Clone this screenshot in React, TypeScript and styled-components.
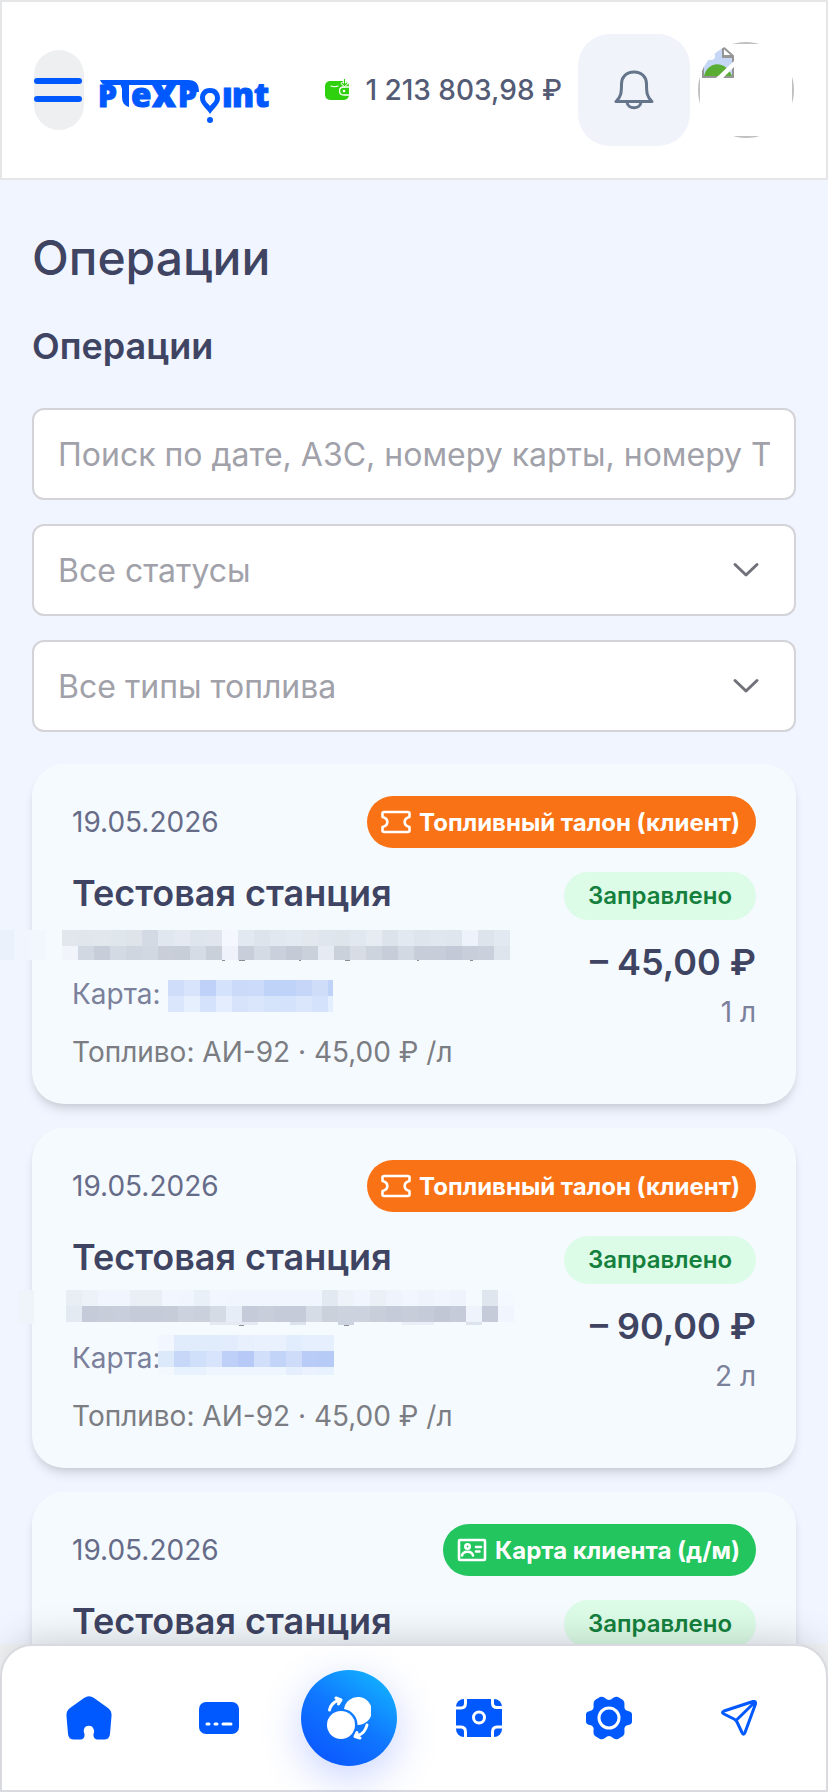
import React from 'react';
import styled, { createGlobalStyle } from 'styled-components';

const BLUE = '#0059ff';

const GlobalStyle = createGlobalStyle`
  *, *::before, *::after { box-sizing: border-box; }
  body {
    margin: 0;
    background: #f2f3f4;
    color: #3e4462;
    font-family: Inter, "Noto Sans", sans-serif;
  }
  button, input, select { font: inherit; }
  h1, h2, h3, p, ul { margin: 0; padding: 0; }
`;

const Page = styled.div`
  display: flex;
  flex-direction: column;
  height: 100vh;
`;

const Header = styled.header`
  display: flex;
  flex: none;
  align-items: center;
  height: 180px;
  padding: 0 32px;
  border: 2px solid #e5e6e8;
  background: #fff;
`;

const MenuButton = styled.button`
  display: flex;
  flex-direction: column;
  justify-content: center;
  gap: 12px;
  width: 50px;
  height: 80px;
  padding: 0;
  border: 0;
  border-radius: 25px;
  background: #eeeff1;
`;

const MenuLine = styled.span`
  width: 48px;
  height: 6px;
  border-radius: 3px;
  background: ${BLUE};
`;

const LogoLink = styled.a`
  display: flex;
  margin-left: 12px;
`;

const Balance = styled.div`
  display: flex;
  align-items: center;
  gap: 16px;
  margin-left: auto;
  color: #535b75;
  font-size: 28px;
  font-weight: 500;
  line-height: 40px;
  white-space: nowrap;
`;

const BellButton = styled.button`
  display: flex;
  align-items: center;
  justify-content: center;
  width: 112px;
  height: 112px;
  margin-left: 16px;
  padding: 0;
  border: 0;
  border-radius: 32px;
  background: #f0f3f9;
`;

const Avatar = styled.button`
  width: 96px;
  height: 96px;
  margin-left: 8px;
  padding: 0;
  overflow: hidden;
  border: 0;
  border-radius: 48px;
  background: #fff;
`;

const AvatarFrame = styled.span`
  display: flex;
  width: 96px;
  height: 96px;
  padding: 2px;
  border: 2px solid #c0c0c0;
`;

const Main = styled.main`
  flex: 1;
  min-height: 0;
  padding: 50px 32px 0;
  overflow: hidden;
  background: #f1f5ff;
`;

const Title = styled.h1`
  font-size: 48px;
  font-weight: 500;
  line-height: 56px;
`;

const Subtitle = styled.h2`
  margin-top: 36px;
  font-size: 36px;
  font-weight: 600;
  line-height: 48px;
`;

const Filters = styled.form`
  display: flex;
  flex-direction: column;
  gap: 24px;
  margin-top: 38px;
`;

const SearchInput = styled.input`
  width: 100%;
  height: 92px;
  padding: 0 24px;
  border: 2px solid #d3d3d8;
  border-radius: 12px;
  background: #fff;
  font-size: 32px;
  &::placeholder { color: #a1a1aa; opacity: 1; }
`;

const SelectField = styled.div`
  position: relative;
  display: flex;
  svg {
    position: absolute;
    top: 32px;
    right: 36px;
    pointer-events: none;
  }
`;

const Select = styled.select`
  width: 100%;
  height: 92px;
  padding: 0 24px;
  appearance: none;
  border: 2px solid #d3d3d8;
  border-radius: 12px;
  background: #fff;
  color: #a1a1aa;
  font-size: 32px;
`;

const CardList = styled.ul`
  display: flex;
  flex-direction: column;
  gap: 24px;
  margin-top: 32px;
  list-style: none;
`;

const Card = styled.li`
  padding: 32px 40px;
  border-radius: 32px;
  background: #f5faff;
  box-shadow: 0 8px 12px -2px rgba(0, 0, 0, 0.1), 0 4px 8px -4px rgba(0, 0, 0, 0.14);
`;

const CardTop = styled.div`
  display: flex;
  align-items: center;
  justify-content: space-between;
`;

const DateText = styled.time`
  color: #666c88;
  font-size: 28px;
  line-height: 40px;
`;

const TypeBadge = styled.span<{ $color: string }>`
  display: flex;
  align-items: center;
  gap: 8px;
  height: 52px;
  padding: 0 16px 0 14px;
  border-radius: 26px;
  background: ${(p) => p.$color};
  color: #fff;
  font-size: 24px;
  font-weight: 700;
  white-space: nowrap;
`;

const CardBody = styled.div`
  display: flex;
  justify-content: space-between;
  margin-top: 24px;
`;

const Details = styled.div`
  display: flex;
  flex-direction: column;
`;

const Station = styled.h3`
  font-size: 36px;
  font-weight: 600;
  line-height: 42px;
`;

const Address = styled.div`
  height: 40px;
  margin-top: 10px;
`;

const CardNumber = styled.p`
  display: flex;
  height: 40px;
  margin-top: 10px;
  color: #7b809b;
  font-size: 28px;
  line-height: 40px;
`;

const Fuel = styled.p`
  margin-top: 18px;
  color: #7b7d82;
  font-size: 28px;
  line-height: 40px;
  white-space: nowrap;
`;

const Totals = styled.div`
  display: flex;
  flex-direction: column;
  align-items: flex-end;
`;

const Status = styled.span`
  height: 48px;
  padding: 0 24px;
  border-radius: 24px;
  background: #dcfce7;
  color: #15803d;
  font-size: 24px;
  font-weight: 600;
  line-height: 48px;
`;

const Price = styled.p`
  margin-top: 18px;
  font-size: 36px;
  font-weight: 600;
  line-height: 48px;
  white-space: nowrap;
`;

const Volume = styled.p`
  margin-top: 6px;
  color: #7b809b;
  font-size: 28px;
  line-height: 40px;
`;

const MosaicSvg = styled.svg`
  display: block;
  overflow: visible;
`;

const Nav = styled.nav`
  position: relative;
  display: grid;
  flex: none;
  grid-template-columns: repeat(6, 1fr);
  align-items: center;
  justify-items: center;
  height: 148px;
  padding: 0 22px;
  border: 2px solid #d9dae0;
  border-radius: 32px 32px 0 0;
  background: #fff;
  box-shadow: 0 -12px 40px -12px rgba(0, 0, 0, 0.2);
`;

const NavLink = styled.a<{ $active?: boolean }>`
  display: flex;
  align-items: center;
  justify-content: center;
  width: 96px;
  height: 96px;
  border-radius: 48px;
  color: ${(p) => (p.$active ? '#fff' : BLUE)};
  background: ${(p) => (p.$active ? 'linear-gradient(35deg, #0b57ff 10%, #1077ff 50%, #12b0ff 90%)' : 'none')};
  box-shadow: ${(p) => (p.$active ? '0 12px 40px rgba(60, 100, 255, 0.28)' : 'none')};
`;

const Logo = () => (
  <svg width="180" height="72" viewBox="-4 -26 180 72" role="img" aria-label="PlexPoint">
    <path d="M0 0H88C96 0 99 4 99 12H93C93 7 92 5 88 5H6Q2 5 0 0Z" fill={BLUE} />
    <g fill={BLUE} stroke={BLUE} strokeWidth="1" fontFamily="Open Sans" fontWeight="800" fontSize="33">
      <text x="-2" y="27" fontSize="30">P</text>
      <text x="31" y="27">e</text>
      <text x="52" y="27" fontSize="38">x</text>
      <text x="78" y="27" fontSize="30">P</text>
      <text x="122 132 154" y="27">ınt</text>
    </g>
    <path d="M20 3H29V27Q22 25 22 17V9Z" fill={BLUE} />
    <path fillRule="evenodd" d="M110 8C103 8 100 13 100 18C100 24 106 28 110 34C114 28 120 24 120 18C120 13 117 8 110 8ZM110 13C113 13 115 15 115 18C115 22 112 23 110 26C108 23 105 22 105 18C105 15 107 13 110 13Z" fill={BLUE} />
    <circle cx="110" cy="40" r="3" fill={BLUE} />
  </svg>
);

const WalletIcon = () => (
  <svg width="24" height="24" viewBox="0 0 24 24" aria-hidden="true">
    <rect y="3" width="24" height="19" rx="5" fill="#2fd10f" />
    <path d="M6 8Q9.500 9.500 13 8" stroke="#fff" strokeWidth="1.200" fill="none" strokeLinecap="round" />
    <path d="M24 9H19C13 9 13 17 19 17H24" fill="#2fd10f" stroke="#fff" strokeWidth="1.300" />
    <circle cx="19" cy="13" r="1.300" fill="#fff" />
    <path d="M19.500 0V7M16.500 4.500L19.500 7.500L22.500 4.500" stroke="#fff" strokeWidth="3" fill="none" />
    <path d="M19.500 1V7M17 5L19.500 7.500L22 5" stroke="#2fd10f" strokeWidth="1.200" fill="none" />
  </svg>
);

const BellIcon = () => (
  <svg width="40" height="40" viewBox="0 0 40 40" fill="none" stroke="#64748b" strokeWidth="3" strokeLinejoin="round" aria-hidden="true">
    <path d="M20 2C12 2 7.500 7.500 7.500 14C7.500 23 7 27 2 31.500H38C33 27 32.500 23 32.500 14C32.500 7.500 28 2 20 2Z" />
    <path d="M13 32C13.500 39.500 26.500 39.500 27 32" />
  </svg>
);

const BrokenImageIcon = () => (
  <svg width="32" height="32" viewBox="0 0 32 32" aria-hidden="true">
    <path d="M1 1H21V11H31V31H1Z" fill="#c5d7f5" stroke="#969696" strokeWidth="2" />
    <path d="M2 30C6 15 23 14 30 30Z" fill="#5aad33" />
    <circle cx="9" cy="10" r="4" fill="#fff" />
    <path d="M21 1V10H31Z" fill="#fff" stroke="#969696" strokeWidth="2" />
    <path d="M32 15V21L21 32H14Z" fill="#fff" />
  </svg>
);

const Chevron = () => (
  <svg width="28" height="28" viewBox="0 0 28 28" fill="none" stroke="#71717a" strokeWidth="3" strokeLinecap="round" strokeLinejoin="round" aria-hidden="true">
    <path d="M3 8.500L14 19L25 8.500" />
  </svg>
);

const TicketIcon = () => (
  <svg width="30" height="24" viewBox="0 0 30 24" fill="none" stroke="#fff" strokeWidth="2.600" strokeLinejoin="round" aria-hidden="true">
    <path d="M3 2H27Q28.500 2 28.500 3.500V7C22 8.500 22 15.500 28.500 17V20.500Q28.500 22 27 22H3Q1.500 22 1.500 20.500V17C8 15.500 8 8.500 1.500 7V3.500Q1.500 2 3 2Z" />
  </svg>
);

const ClientCardIcon = () => (
  <svg width="30" height="24" viewBox="0 0 30 24" fill="none" stroke="#fff" strokeWidth="2.600" strokeLinecap="round" aria-hidden="true">
    <rect x="2" y="2" width="26" height="20" rx="1" />
    <circle cx="10.500" cy="8.500" r="2.200" />
    <path d="M5 17.500C6 12.500 15 12.500 16 17.500M19 9H24M19 13.500H22.500" />
  </svg>
);

const HomeIcon = () => (
  <svg width="46" height="44" viewBox="0 0 46 44" fill="currentColor" aria-hidden="true">
    <path d="M18 2Q23 -1.500 28 2L42 12Q46 15 45.500 20L44 38Q43.500 43.500 38 43.500H31Q27 43 27.500 38Q29 35 27 32C26 29 20 29 18.500 32Q17 35 18.500 38Q19 43 15 43.500H8Q2.500 43.500 2 38L.5 20Q0 15 4 12Z" />
  </svg>
);

const CardIcon = () => (
  <svg width="40" height="32" viewBox="0 0 40 32" aria-hidden="true">
    <rect width="40" height="32" rx="7" fill="currentColor" />
    <path d="M8 22H10M16 22H18M24 22H32" stroke="#fff" strokeWidth="3" strokeLinecap="round" />
  </svg>
);

const OperationsIcon = () => (
  <svg width="44" height="44" viewBox="0 0 44 44" fill="currentColor" aria-hidden="true">
    <path d="M17 13A14 14 0 1 1 30.500 29A16 16 0 0 0 17 13Z" />
    <circle cx="14" cy="29" r="14" />
    <g fill="none" stroke="currentColor" strokeWidth="3" strokeLinecap="round" strokeLinejoin="round">
      <path d="M2.500 14Q4 7 11 4.500M9 2L14 4L11.500 8" />
      <path d="M40 29Q38 37 31 39.500M33 42L28 40.500L30 36.500" />
    </g>
  </svg>
);

const MoneyIcon = () => (
  <svg width="46" height="38" viewBox="0 0 46 38" aria-hidden="true">
    <rect width="46" height="38" rx="8" fill="currentColor" />
    <g fill="none" stroke="#fff" strokeWidth="3">
      <path d="M0 9H5Q9.500 9 9.500 4V0M36.500 0V4Q36.500 8.500 41 8.500H46M0 28H5Q9.500 28 9.500 33V38M36.500 38V33Q36.500 28 41 28H46" />
      <circle cx="23" cy="18.500" r="5.500" />
    </g>
  </svg>
);

const GearIcon = () => (
  <svg width="46" height="44" viewBox="0 0 46 44" aria-hidden="true">
    <path d="M14 1Q16 0 19 2Q23 6 27 2Q30 0 32 1L37 4Q39 6 38.500 9Q37.500 14 42 15Q45.500 15.500 46 18V26Q45.500 28.500 42 29Q37.500 30 38.500 35Q39 38 37 40L32 43Q30 44 27 42Q23 38 19 42Q16 44 14 43L9 40Q7 38 7.500 35Q8.500 30 4 29Q.5 28.500 0 26V18Q.5 15.500 4 15Q8.500 14 7.500 9Q7 6 9 4Z" fill="currentColor" />
    <circle cx="23" cy="22" r="10" fill="none" stroke="#fff" strokeWidth="3" />
  </svg>
);

const SendIcon = () => (
  <svg width="36" height="36" viewBox="0 0 36 36" fill="none" stroke="currentColor" strokeWidth="3" strokeLinejoin="round" aria-hidden="true">
    <path d="M32 1.500L3 11Q0 12.500 3 14L13 19Q15 20 16 22L21 32.500Q22.500 36 24 32.500L34.500 4Q35 1 32 1.500ZM15 20.500L34 2" />
  </svg>
);

type Cell = [x: number, y: number, width: number, height: number, color: string];

const row = (x: number, y: number, height: number, colors: string): Cell[] =>
  colors.split(' ').map((c, i) => [x + i * 16, y, 16, height, '#' + c]);

const Mosaic = ({ cells, width }: { cells: Cell[]; width: number }) => (
  <MosaicSvg width={width} height="40" shapeRendering="crispEdges" aria-hidden="true">
    {cells.map(([x, y, w, h, color], i) => (
      <rect key={i} x={x} y={y} width={w} height={h} fill={color} />
    ))}
  </MosaicSvg>
);

const addressA: Cell[] = [
  [-72, 6, 14, 30, '#eaf1fb'], [-58, 6, 16, 30, '#f0f5fe'], [-42, 6, 16, 30, '#f2f7fe'],
  ...row(-10, 6, 16, 'e2e7ee e1e6ed e1e7ed dfe6ec dfe4eb d3dae3 e1e7ee e5eaf2 dfe5ec e1e6ee f4f8fe e3e9f0 dde4eb e2e8ef e4eaf1 e2e8ee e0e6ed dee5eb e2e8ef e6ecf2 dce3eb e3e9f0 dee5ec e1e7ee e0e6ed eef2fb dde4ec e2e9f0'),
  ...row(-10, 22, 14, 'f1f4fb d2d8e1 c8ced9 d4dae3 cfd6df d2d8e2 c9ced8 c8ced8 d6dce5 cad0da eff2fa c9cfda d5dbe4 cbd1dc c4cad6 cbd1db e6ebf3 cbd1da d7dce5 ced4de c8ced9 d2d9e2 c8ced9 c8ced9 c3c9d6 c9cfda cbd1dc dfe5ed'),
  [150, 36, 3, 1, '#8b8d98'], [167, 36, 6, 1, '#8b8d98'], [227, 36, 2, 1, '#8b8d98'], [273, 36, 5, 1, '#8b8d98'], [345, 36, 2, 1, '#8b8d98'], [398, 36, 3, 1, '#8b8d98'],
];

const addressB: Cell[] = [
  [-54, 2, 16, 34, '#eff4fb'],
  ...row(-6, 2, 16, 'e9eef4 edf1f8 f1f5fd f1f5fd e9eff5 e9eff5 f2f6fe f1f5fd eaf0f7 f2f6fe f1f5fd f1f5fd f1f5fd f1f5fd f1f5fd f1f5fd e3e9f0 eef3fa f1f5fd ebf0f7 eff3fb f2f6fe eff3fb f1f5fd eff3fb f5faff e0e6ee f4f8ff'),
  ...row(-6, 18, 16, 'e4eaf1 c5cbd8 c8ced9 c8cedb c5cbd8 c5cbd8 c7cdd8 cdd3de cbd1dc d5dbe5 e7edf7 c5cbd8 c8ceda c5cbd8 c5cbd8 d6dce5 cad1db cdd3de cdd3de c8ceda c5cbd8 c7cdd9 c5cbd8 c1c7d4 c5cbd8 eff4fc c5cbd8 f1f6fe'),
  [138, 34, 48, 3, '#e4e9f2'], [218, 34, 16, 3, '#dde3ec'], [266, 34, 16, 3, '#ced4df'], [330, 34, 32, 3, '#eaeff7'], [394, 34, 16, 3, '#dde3ec'],
  [167, 37, 5, 1, '#8b8d98'], [272, 37, 5, 1, '#8b8d98'],
];

const numberA: Cell[] = [
  ...row(7, 6, 16, 'cfddfa d8e4fb bfd1f8 d5e2fb ccdafa ccdbf9 bfd2f7 bfd2f7 c5d6f9 cfddf9'),
  ...row(7, 22, 16, 'd9e6fb e5effd d4e2fb e4edfd d6e3fb d9e6fc d5e3fb d5e2fb d9e6fc d4e2fb'),
  [167, 6, 5, 16, '#bfd2f8'], [167, 22, 5, 16, '#e3eefe'],
];

const numberB: Cell[] = [
  ...row(-3, -3, 16, 'f1f6ff e0ecfc e0ebfc e0ebfc e2ecfd e8f0fe e9f1fe e9f1ff e1ecfd e5effd e5effd'),
  ...row(-3, 13, 16, 'dce9fb c6d7f8 d0dffa d8e4fc bed0f8 b7caf7 d2dffb c2d4f8 cedcfa b8ccf7 b7cbf7'),
  ...row(-3, 29, 8, 'f3f8ff e8f1fe e8f1fe edf5ff edf5ff edf5ff edf5ff edf5ff e5eefd e9f2fe e8f2fe'),
];

const operations = [
  { kind: 'Топливный талон (клиент)', color: '#f97316', icon: <TicketIcon />, address: addressA, number: numberA, price: '– 45,00 ₽', volume: '1 л' },
  { kind: 'Топливный талон (клиент)', color: '#f97316', icon: <TicketIcon />, address: addressB, number: numberB, price: '– 90,00 ₽', volume: '2 л' },
  { kind: 'Карта клиента (д/м)', color: '#22c55e', icon: <ClientCardIcon />, address: addressA, number: numberA, price: '– 45,00 ₽', volume: '1 л' },
];

const navItems = [
  { label: 'Главная', icon: <HomeIcon /> },
  { label: 'Карты', icon: <CardIcon /> },
  { label: 'Операции', icon: <OperationsIcon />, active: true },
  { label: 'Платежи', icon: <MoneyIcon /> },
  { label: 'Настройки', icon: <GearIcon /> },
  { label: 'Поддержка', icon: <SendIcon /> },
];

export default function App() {
  return (
    <Page>
      <GlobalStyle />
      <Header>
        <MenuButton type="button" aria-label="Меню">
          <MenuLine />
          <MenuLine />
        </MenuButton>
        <LogoLink href="#" aria-label="PlexPoint">
          <Logo />
        </LogoLink>
        <Balance>
          <WalletIcon />
          <span>1 213 803,98 ₽</span>
        </Balance>
        <BellButton type="button" aria-label="Уведомления">
          <BellIcon />
        </BellButton>
        <Avatar type="button" aria-label="Профиль">
          <AvatarFrame>
            <BrokenImageIcon />
          </AvatarFrame>
        </Avatar>
      </Header>
      <Main>
        <Title>Операции</Title>
        <Subtitle>Операции</Subtitle>
        <Filters>
          <SearchInput type="text" aria-label="Поиск" placeholder="Поиск по дате, АЗС, номеру карты, номеру Т" />
          <SelectField>
            <Select aria-label="Статус">
              <option>Все статусы</option>
            </Select>
            <Chevron />
          </SelectField>
          <SelectField>
            <Select aria-label="Тип топлива">
              <option>Все типы топлива</option>
            </Select>
            <Chevron />
          </SelectField>
        </Filters>
        <CardList>
          {operations.map((op, i) => (
            <Card key={i}>
              <CardTop>
                <DateText dateTime="2026-05-19">19.05.2026</DateText>
                <TypeBadge $color={op.color}>
                  {op.icon}
                  {op.kind}
                </TypeBadge>
              </CardTop>
              <CardBody>
                <Details>
                  <Station>Тестовая станция</Station>
                  <Address>
                    <Mosaic cells={op.address} width={438} />
                  </Address>
                  <CardNumber as="div">
                    Карта:
                    <Mosaic cells={op.number} width={176} />
                  </CardNumber>
                  <Fuel>Топливо: АИ-92 · 45,00 ₽ /л</Fuel>
                </Details>
                <Totals>
                  <Status>Заправлено</Status>
                  <Price>{op.price}</Price>
                  <Volume>{op.volume}</Volume>
                </Totals>
              </CardBody>
            </Card>
          ))}
        </CardList>
      </Main>
      <Nav aria-label="Основная навигация">
        {navItems.map((item) => (
          <NavLink key={item.label} href="#" aria-label={item.label} $active={item.active}>
            {item.icon}
          </NavLink>
        ))}
      </Nav>
    </Page>
  );
}
